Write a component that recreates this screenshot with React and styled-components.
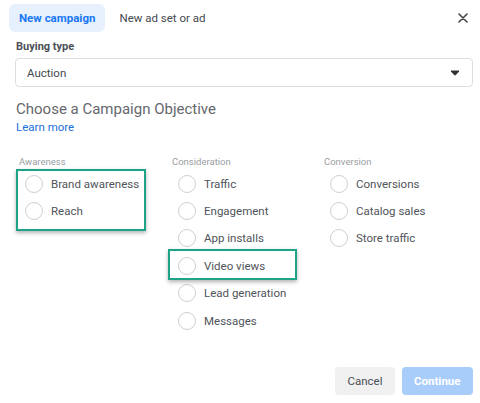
import styled, { createGlobalStyle } from "styled-components";

const GlobalStyle = createGlobalStyle`
  html, body {
    margin: 0;
    background: #fff;
    font-family: Roboto, "Liberation Sans", Arial, sans-serif;
  }
`;

const objectives = [
    {
        title: "Awareness",
        items: ["Brand awareness", "Reach"],
        highlight: [0, 1],
        box: { top: -1, bottom: -6, left: -3, width: 130 },
    },
    {
        title: "Consideration",
        items: ["Traffic", "Engagement", "App installs", "Video views", "Lead generation", "Messages"],
        highlight: [3, 3],
        box: { top: -3, bottom: 0, left: -4, width: 129 },
    },
    {
        title: "Conversion",
        items: ["Conversions", "Catalog sales", "Store traffic"],
    },
];

const Radio = ({ label }) => (
    <Option>
        <Circle />
        <span>{label}</span>
    </Option>
);

const Column = ({ title, items, highlight, box }) => {
    const before = highlight ? items.slice(0, highlight[0]) : items;
    const marked = highlight ? items.slice(highlight[0], highlight[1] + 1) : [];
    const after = highlight ? items.slice(highlight[1] + 1) : [];

    return (
        <Group>
            <GroupTitle>{title}</GroupTitle>
            {before.map((it) => (
                <Radio key={it} label={it} />
            ))}
            {marked.length > 0 && (
                <Highlight $box={box}>
                    {marked.map((it) => (
                        <Radio key={it} label={it} />
                    ))}
                </Highlight>
            )}
            {after.map((it) => (
                <Radio key={it} label={it} />
            ))}
        </Group>
    );
};

const App = () => {
    return (
        <Dialog>
            <GlobalStyle />
            <TopBar>
                <Tab $active>New campaign</Tab>
                <Tab>New ad set or ad</Tab>
                <Close aria-label="close">
                    <svg width="10" height="10" viewBox="0 0 10 10">
                        <path d="M1 1L9 9M9 1L1 9" stroke="#444" strokeWidth="1.6" strokeLinecap="round" />
                    </svg>
                </Close>
            </TopBar>

            <Body>
                <FieldLabel>Buying type</FieldLabel>
                <Select>
                    <span>Auction</span>
                    <svg width="10" height="6" viewBox="0 0 10 6">
                        <path d="M1 1h8l-3.3 3.7a0.9 0.9 0 0 1-1.4 0z" fill="#333" stroke="#333" strokeWidth="1" strokeLinejoin="round" />
                    </svg>
                </Select>

                <Heading>Choose a Campaign Objective</Heading>
                <Link>Learn more</Link>

                <Columns>
                    {objectives.map((o) => (
                        <Column key={o.title} {...o} />
                    ))}
                </Columns>
            </Body>

            <Footer>
                <Button>Cancel</Button>
                <Button $primary>Continue</Button>
            </Footer>
        </Dialog>
    );
};

const Dialog = styled.div`
    width: 480px;
    height: 403px;
    display: flex;
    flex-direction: column;
    box-sizing: border-box;
`;

const TopBar = styled.div`
    display: flex;
    align-items: center;
    gap: 4px;
    padding: 4px 11px 0 9px;
    height: 28px;
`;

const Tab = styled.div`
    height: 28px;
    display: flex;
    align-items: center;
    padding: 0 10px;
    border-radius: 6px;
    font-size: 11.5px;
    font-weight: ${(p) => (p.$active ? 700 : 400)};
    color: ${(p) => (p.$active ? "#1877f2" : "#444950")};
    background: ${(p) => (p.$active ? "#e7f0fd" : "transparent")};
`;

const Close = styled.div`
    margin-left: auto;
    width: 12px;
    height: 12px;
    display: flex;
    align-items: center;
    justify-content: center;
`;

const Body = styled.div`
    padding: 0 7px 0 15px;
    display: flex;
    flex-direction: column;
`;

const FieldLabel = styled.div`
    margin-top: 8px;
    padding-left: 1px;
    font-size: 11px;
    font-weight: 700;
    color: #4b4f56;
    line-height: 14px;
`;

const Select = styled.div`
    margin-top: 4px;
    height: 29px;
    box-sizing: border-box;
    border: 1px solid #dadde1;
    border-radius: 4px;
    display: flex;
    align-items: center;
    justify-content: space-between;
    padding: 0 12px 0 11px;
    font-size: 11.5px;
    color: #444950;
`;

const Heading = styled.div`
    margin-top: 12px;
    padding-left: 1px;
    font-size: 15px;
    line-height: 20px;
    color: #65686d;
`;

const Link = styled.div`
    padding-left: 1px;
    font-size: 11.5px;
    line-height: 16px;
    color: #216fdb;
`;

const Columns = styled.div`
    margin-top: 21px;
    padding-left: 4px;
    display: grid;
    grid-template-columns: 153px 152px 1fr;
`;

const Group = styled.div`
    display: flex;
    flex-direction: column;
`;

const GroupTitle = styled.div`
    font-size: 9.5px;
    line-height: 12px;
    color: #9a9ea3;
    margin-bottom: 2px;
`;

const Highlight = styled.div`
    position: relative;

    &::after {
        content: "";
        position: absolute;
        top: ${(p) => p.$box.top}px;
        bottom: ${(p) => p.$box.bottom}px;
        left: ${(p) => p.$box.left}px;
        width: ${(p) => p.$box.width}px;
        border: 2.5px solid #1fa386;
        box-sizing: border-box;
        box-shadow: 0 2px 4px rgba(0, 0, 0, 0.3);
        pointer-events: none;
    }
`;

const Option = styled.div`
    height: 27.4px;
    display: flex;
    align-items: center;
    gap: 8px;
    padding-left: 6px;
    font-size: 11.5px;
    color: #50545a;
`;

const Circle = styled.span`
    width: 18px;
    height: 18px;
    box-sizing: border-box;
    border-radius: 50%;
    border: 1px solid #ccd0d5;
    background: #fff;
    flex-shrink: 0;
`;

const Footer = styled.div`
    margin-top: auto;
    margin-bottom: 8px;
    display: flex;
    justify-content: flex-end;
    gap: 7px;
    padding-right: 7px;
`;

const Button = styled.div`
    height: 28px;
    display: flex;
    align-items: center;
    padding: 0 ${(p) => (p.$primary ? "12.5px" : "12px")};
    border-radius: 4px;
    font-size: 11.5px;
    font-weight: ${(p) => (p.$primary ? 700 : 400)};
    color: ${(p) => (p.$primary ? "#fff" : "#4b4f56")};
    background: ${(p) => (p.$primary ? "#a8cdfb" : "#f0f0f0")};
`;

export default App;
